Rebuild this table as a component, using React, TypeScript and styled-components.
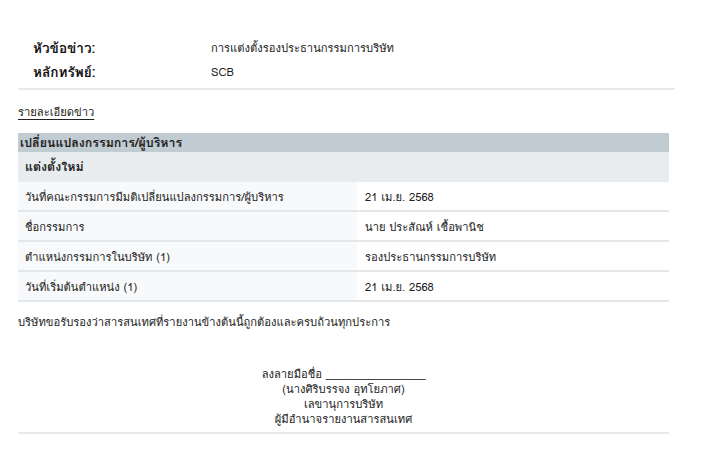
import React, { FC } from "react";
import styled, { createGlobalStyle } from "styled-components";

const GlobalStyle = createGlobalStyle`
  body {
    margin: 0;
    background: #ffffff;
    font-family: Tahoma, Loma, Waree, Garuda, "Noto Sans Thai", "DejaVu Sans", "Liberation Sans", sans-serif;
    color: #222222;
  }
`;

const Page = styled.div`
  padding: 36px 0 0 18px;
  width: 657px;
`;

const HeadBlock = styled.div`
  border-bottom: 2px solid #e6eaed;
  padding-bottom: 4px;
`;

const HeadRow = styled.div`
  display: grid;
  grid-template-columns: 178px 1fr;
  align-items: center;
  height: 24px;
  padding-left: 15px;
`;

const HeadLabel = styled.div`
  font-size: 13.6px;
  line-height: 18px;
  font-weight: bold;
  color: #111111;
`;

const HeadValue = styled.div`
  font-size: 11.2px;
  line-height: 16px;
`;

const SectionLink = styled.div`
  margin-top: 15px;
  font-size: 11.2px;
  line-height: 15px;
  text-decoration: underline;
  text-underline-offset: 3px;
`;

const Table = styled.div`
  margin-top: 13px;
  width: 651px;
`;

const TableTitle = styled.div`
  background: #c1ccd2;
  font-size: 12.4px;
  font-weight: bold;
  height: 19px;
  line-height: 20px;
  padding-left: 2px;
`;

const SubTitle = styled.div`
  background: #e8ecef;
  font-size: 12.4px;
  font-weight: bold;
  height: 30px;
  line-height: 29px;
  padding-left: 7px;
`;

const Row = styled.div`
  display: grid;
  grid-template-columns: 339px 1fr;
  height: 30px;
  border-bottom: 2px solid #e4e7ea;
  box-sizing: border-box;
`;

const Cell = styled.div<{ $label?: boolean }>`
  display: flex;
  align-items: center;
  font-size: 11.2px;
  line-height: 16px;
  padding-top: 1px;
  padding-left: ${(p) => (p.$label ? "7px" : "8px")};
  background: ${(p) => (p.$label ? "#f8f9fa" : "#ffffff")};
`;

const Statement = styled.div`
  margin-top: 13px;
  font-size: 11.2px;
  line-height: 15px;
`;

const Signature = styled.div`
  width: 651px;
  margin-top: 37px;
  padding-bottom: 5px;
  border-bottom: 2px solid #e6eaed;
  text-align: center;
  font-size: 11.2px;
  line-height: 15px;
`;

const rows = [
  ["วันที่คณะกรรมการมีมติเปลี่ยนแปลงกรรมการ/ผู้บริหาร", "21 เม.ย. 2568"],
  ["ชื่อกรรมการ", "นาย ประสัณห์ เชื้อพานิช"],
  ["ตำแหน่งกรรมการในบริษัท (1)", "รองประธานกรรมการบริษัท"],
  ["วันที่เริ่มต้นตำแหน่ง (1)", "21 เม.ย. 2568"],
];

const App: FC = () => {
  return (
    <>
      <GlobalStyle />
      <Page>
        <HeadBlock>
          <HeadRow>
            <HeadLabel>หัวข้อข่าว:</HeadLabel>
            <HeadValue>การแต่งตั้งรองประธานกรรมการบริษัท</HeadValue>
          </HeadRow>
          <HeadRow>
            <HeadLabel>หลักทรัพย์:</HeadLabel>
            <HeadValue>SCB</HeadValue>
          </HeadRow>
        </HeadBlock>
        <SectionLink>รายละเอียดข่าว</SectionLink>
        <Table>
          <TableTitle>เปลี่ยนแปลงกรรมการ/ผู้บริหาร</TableTitle>
          <SubTitle>แต่งตั้งใหม่</SubTitle>
          {rows.map(([label, value], idx) => (
            <Row key={idx}>
              <Cell $label>{label}</Cell>
              <Cell>{value}</Cell>
            </Row>
          ))}
        </Table>
        <Statement>
          บริษัทขอรับรองว่าสารสนเทศที่รายงานข้างต้นนี้ถูกต้องและครบถ้วนทุกประการ
        </Statement>
        <Signature>
          ลงลายมือชื่อ ________________
          <br />
          (นางศิริบรรจง อุทโยภาศ)
          <br />
          เลขานุการบริษัท
          <br />
          ผู้มีอำนาจรายงานสารสนเทศ
        </Signature>
      </Page>
    </>
  );
};

export default App;
